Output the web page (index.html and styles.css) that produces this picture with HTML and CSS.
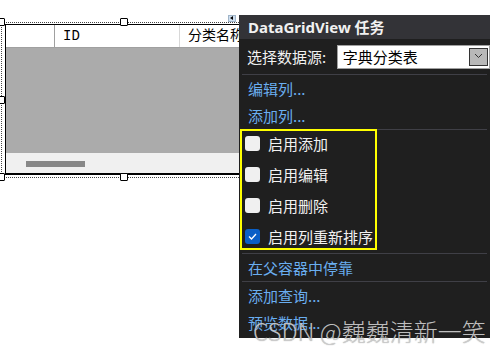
FILE: index.html
```html
<!DOCTYPE html>
<html lang="zh-CN">
<head>
    <meta charset="UTF-8">
    <meta name="viewport" content="width=device-width, initial-scale=1.0">
    <title>DataGridView 任务</title>
    <link rel="stylesheet" href="styles.css">
</head>
<body>
    <div class="surface">
        <div class="frame">
            <div class="grid">
                <div class="grid-head">
                    <div class="cell corner"></div>
                    <div class="cell col-id">ID</div>
                    <div class="cell col-name">分类名称</div>
                </div>
                <div class="grid-body"></div>
                <div class="hscroll"><div class="thumb"></div></div>
            </div>
            <span class="handle h-tl"></span>
            <span class="handle h-tc"></span>
            <span class="handle h-ml"></span>
            <span class="handle h-bl"></span>
            <span class="handle h-bc"></span>
        </div>

        <span class="tag-glyph"></span>

        <div class="tasks">
            <div class="tasks-title">DataGridView 任务</div>
            <div class="source-row">
                <span class="label">选择数据源:</span>
                <div class="combo">
                    <span>字典分类表</span>
                    <span class="combo-btn">
                        <svg width="9" height="6" viewBox="0 0 9 6"><path d="M1 1 L4.5 4.5 L8 1" fill="none" stroke="#333" stroke-width="1"/></svg>
                    </span>
                </div>
            </div>
            <div class="sep"></div>
            <a class="task-link">编辑列...</a>
            <a class="task-link">添加列...</a>
            <div class="sep"></div>
            <div class="checks">
                <label class="check"><span class="box"></span>启用添加</label>
                <label class="check"><span class="box"></span>启用编辑</label>
                <label class="check"><span class="box"></span>启用删除</label>
                <label class="check"><span class="box on">
                    <svg width="9" height="7" viewBox="0 0 9 7"><path d="M1 3.5 L3.5 6 L8 1" fill="none" stroke="#fff" stroke-width="1.3"/></svg>
                </span>启用列重新排序</label>
            </div>
            <div class="sep"></div>
            <a class="task-link">在父容器中停靠</a>
            <div class="sep"></div>
            <a class="task-link">添加查询...</a>
            <a class="task-link">预览数据...</a>
        </div>

        <div class="watermark">CSDN @巍巍清新一笑</div>
    </div>
</body>
</html>
```

FILE: styles.css
```css
body { margin: 0; background: #ffffff; font-family: "Noto Sans CJK SC", "Noto Sans", sans-serif; }
.surface { position: relative; width: 500px; height: 354px; overflow: hidden; }

/* designer selection around the grid */
.frame { position: relative; width: 250px; margin: 22px 0 0 1px; padding: 1px 0 2px 3px; border: 1px dotted #444; border-right: none; }
.grid { background: #ababab; border: 1px solid #000; border-bottom-width: 2px; border-right: none; }
.grid-head { display: flex; height: 22px; background: #fff; border-bottom: 1px solid #a0a0a0; }
.cell { font-family: "Liberation Mono", "Noto Sans CJK SC", monospace; font-size: 14px; line-height: 22px; color: #000; padding-left: 8px; box-sizing: border-box; }
.corner { width: 49px; padding: 0; border-right: 1px solid #a0a0a0; }
.col-id { width: 125px; border-right: 1px solid #d8d8d8; }
.col-name { flex: 1; white-space: nowrap; }
.grid-body { height: 105px; }
.hscroll { height: 20px; background: #f0f0f0; padding-top: 8px; box-sizing: border-box; }
.thumb { width: 59px; height: 6px; margin-left: 20px; background: #888; }

.handle { position: absolute; width: 6px; height: 6px; background: #fff; border: 1px solid #000; border-radius: 1px; }
.h-tl { left: -5px; top: -5px; }
.h-tc { left: 118px; top: -5px; }
.h-ml { left: -5px; top: 73px; }
.h-bl { left: -5px; top: 150px; }
.h-bc { left: 118px; top: 150px; }

.tag-glyph { position: absolute; left: 228px; top: 15px; width: 8px; height: 7px; background: #cfdff0; box-sizing: border-box; border: 1px solid #9fb4c8; }
.tag-glyph::after { content: ""; position: absolute; left: 1px; top: 0; border-top: 2.5px solid transparent; border-bottom: 2.5px solid transparent; border-right: 3px solid #000; }

/* smart tag panel */
.tasks { position: absolute; left: 239px; top: 15px; width: 251px; height: 323px; background: #1f1f1f; display: flex; flex-direction: column; }
.tasks-title { height: 24px; background: #333337; color: #f1f1f1; font-family: "Noto Sans", "Noto Sans CJK SC", sans-serif; font-weight: bold; font-size: 15px; line-height: 24px; padding-left: 9px; }
.source-row { height: 35px; display: flex; align-items: center; padding-left: 8px; }
.label { color: #f1f1f1; font-size: 15px; width: 90px; }
.combo { width: 147px; height: 22px; background: #fff; border: 1px solid #a0a0a0; display: flex; align-items: center; justify-content: space-between; font-size: 15px; color: #000; padding-left: 5px; }
.combo-btn { width: 19px; height: 18px; margin-right: 1px; background: #b8b8b8; border: 1px solid #333; display: flex; justify-content: center; padding-top: 4px; box-sizing: border-box; }
.sep { height: 1px; background: #3f3f46; margin: 0 3px; flex-shrink: 0; }
.task-link { display: block; height: 27px; line-height: 27px; padding-left: 9px; color: #6aaef0; font-size: 15px; cursor: pointer; }

.checks { width: 137px; height: 121px; box-sizing: border-box; margin: -1px 0 3px 1px; border: 2px solid #ffff00; flex-shrink: 0; }
.check { display: flex; align-items: center; height: 31px; color: #f1f1f1; font-size: 15px; }
.check:first-child { margin-top: -3px; }
.box { width: 15px; height: 15px; margin: 0 8px 0 3px; background: #f0f0f0; border-radius: 3px; display: flex; align-items: center; justify-content: center; }
.box.on { background: #0a5fc6; }

.watermark { position: absolute; left: 253px; top: 313px; font-size: 24px; font-weight: 300; color: rgba(205, 205, 205, 0.92); text-shadow: 0 0 1px rgba(80, 80, 80, 0.5); white-space: nowrap; }
```
